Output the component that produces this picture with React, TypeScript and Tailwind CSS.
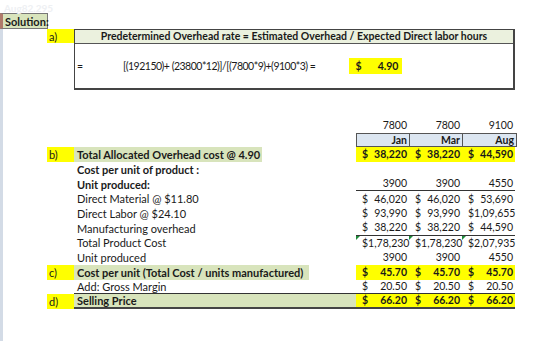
import React from 'react';

type Cell = { v: string; dollar?: boolean; flag?: boolean };

type Row = {
  tag?: string;
  label?: string;
  labelBold?: boolean;
  green?: string;
  cells?: Cell[];
  bold?: boolean;
  yellow?: boolean;
  lineUnder?: 'values' | 'full' | 'thick';
};

const money = (a: string, b: string, c: string, flag = false): Cell[] => [
  { v: a, dollar: true, flag },
  { v: b, dollar: true, flag },
  { v: c, dollar: true, flag },
];

const plain = (a: string, b: string, c: string): Cell[] => [{ v: a }, { v: b }, { v: c }];

const rows: Row[] = [
  { tag: 'b)', label: 'Total Allocated Overhead cost @ 4.90', labelBold: true, green: 'w-[188px]', cells: money('38,220', '38,220', '44,590'), bold: true, yellow: true },
  { label: 'Cost per unit of product :', labelBold: true },
  { label: 'Unit produced:', labelBold: true, cells: plain('3900', '3900', '4550'), lineUnder: 'values' },
  { label: 'Direct Material @ $11.80', cells: money('46,020', '46,020', '53,690') },
  { label: 'Direct Labor @ $24.10', cells: money('93,990', '93,990', '1,09,655') },
  { label: 'Manufacturing overhead', cells: money('38,220', '38,220', '44,590'), lineUnder: 'values' },
  { label: 'Total Product Cost', cells: money('1,78,230', '1,78,230', '2,07,935', true) },
  { label: 'Unit produced', cells: plain('3900', '3900', '4550') },
  { tag: 'c)', label: 'Cost per unit (Total Cost / units manufactured)', labelBold: true, green: 'w-[235px]', cells: money('45.70', '45.70', '45.70'), bold: true, yellow: true },
  { label: 'Add: Gross Margin', cells: money('20.50', '20.50', '20.50'), lineUnder: 'full' },
  { tag: 'd)', label: 'Selling Price', labelBold: true, green: 'w-full', cells: money('66.20', '66.20', '66.20'), bold: true, yellow: true, lineUnder: 'thick' },
];

const ValueCell = ({ cell, bold, yellow, line }: { cell?: Cell; bold?: boolean; yellow?: boolean; line?: string }) => (
  <div
    className={`relative w-[53px] h-full flex items-center justify-between pl-[6px] pr-[2px] ${yellow ? 'bg-[#ffff00]' : ''} ${bold ? 'font-bold' : ''} ${
      line === 'values' || line === 'full' ? 'border-b border-[#333]' : line === 'thick' ? 'border-b-2 border-[#444]' : ''
    }`}
  >
    {cell?.flag && (
      <span className="absolute left-0 top-0 w-0 h-0 border-t-[4px] border-t-[#1f8a3a] border-r-[4px] border-r-transparent" />
    )}
    {cell && (cell.dollar ? <span>$</span> : <span />)}
    {cell && <span>{cell.v}</span>}
  </div>
);

const TableRow = ({ row }: { row: Row }) => {
  const fullLine = row.lineUnder === 'full' ? 'border-b border-[#333]' : row.lineUnder === 'thick' ? 'border-b-2 border-[#444]' : '';
  return (
    <div className="flex h-[14.7px] leading-none">
      <div className={`ml-[47px] w-[27px] h-full flex items-center pl-[2px] text-[11px] ${row.tag ? 'bg-[#ffff00]' : ''}`}>{row.tag}</div>
      <div className={`w-[282px] h-full flex ${fullLine}`}>
        <div className={`h-full flex items-center pl-[3px] text-[11px] ${row.green ?? ''} ${row.green ? 'bg-[#d8e4bc]' : ''} ${row.labelBold ? 'font-bold' : ''}`}>
          <span className="whitespace-nowrap">{row.label}</span>
        </div>
      </div>
      {[0, 1, 2].map((i) => (
        <ValueCell key={i} cell={row.cells?.[i]} bold={row.bold} yellow={row.yellow} line={row.lineUnder} />
      ))}
    </div>
  );
};

export default function App() {
  return (
    <div
      className="relative w-[560px] h-[341px] bg-white text-[#1a1a1a] text-[10.5px] overflow-hidden"
      style={{ fontFamily: 'Lato, "Open Sans", sans-serif' }}
    >
      <div className="absolute left-0 top-[29px] bottom-0 w-[3px] bg-[#d3dbe6]" />
      <div className="absolute left-[4px] top-[1px] text-[#eef0f3] font-bold text-[10px]">Aug82.295</div>

      <div className="pt-[13px]">
        <div className="w-[48px] h-[16px] bg-[#d8e4bc] border border-[#777] border-l-[3px] border-l-[#b07a6a] flex items-center pl-[2px] font-bold text-[11px] leading-none">
          Solution:
        </div>

        <div className="flex">
          <div className="ml-[47px] w-[27px] h-[14px] bg-[#ffff00] flex items-center pl-[2px] text-[11px] leading-none">a)</div>
          <div className="w-[441px] border border-[#444] border-r-2 border-b-2">
            <div className="h-[14px] bg-[#ebf1de] border-b border-[#555] flex items-center justify-center font-bold leading-none">
              Predetermined Overhead rate = Estimated Overhead / Expected Direct labor hours
            </div>
            <div className="h-[44px] flex items-center leading-none">
              <span className="ml-[2px] w-[46px] shrink-0">=</span>
              <span className="whitespace-nowrap tracking-[-0.5px]">[(192150)+ (23800*12)]/[(7800*9)+(9100*3) =</span>
              <div className="ml-[34px] w-[53px] h-[16px] bg-[#ffff00] flex items-center justify-between pl-[6px] pr-[4px] font-bold">
                <span>$</span>
                <span>4.90</span>
              </div>
            </div>
          </div>
        </div>

        <div className="mt-[28px]">
          <div className="flex h-[14.7px] leading-none">
            <div className="w-[356px]" />
            {['7800', '7800', '9100'].map((v, i) => (
              <div key={i} className="w-[53px] h-full flex items-center justify-end pr-[2px]">{v}</div>
            ))}
          </div>
          <div className="flex h-[14.7px] leading-none">
            <div className="w-[356px]" />
            <div className="flex border border-[#555] bg-[#dce6f1] font-bold">
              {['Jan', 'Mar', 'Aug'].map((v, i) => (
                <div key={i} className={`w-[53px] h-full flex items-center justify-end pr-[2px] ${i < 2 ? 'border-r border-[#555]' : ''}`}>{v}</div>
              ))}
            </div>
          </div>
          {rows.map((r, i) => (
            <TableRow key={i} row={r} />
          ))}
        </div>
      </div>
    </div>
  );
}
